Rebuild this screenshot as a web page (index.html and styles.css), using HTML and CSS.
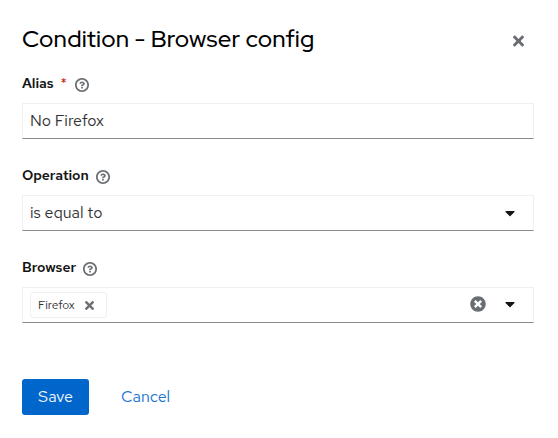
FILE: index.html
```html
<!DOCTYPE html>
<html lang="en">
<head>
<meta charset="utf-8">
<title>Condition - Browser config</title>
<link rel="stylesheet" href="styles.css">
</head>
<body>
<svg class="defs" width="0" height="0">
<symbol id="help" viewBox="0 0 1024 1024"><path d="M521.3,576 C627.5,576 713.7,502 713.7,413.7 C713.7,325.4 627.6,253.6 521.3,253.6 C366,253.6 334.5,337.7 329.2,407.2 C329.2,414.3 335.2,416 343.5,416 L445,416 C450.5,416 458,415.5 460.8,406.5 C460.8,362.6 582.9,357.1 582.9,413.6 C582.9,441.9 556.2,470.9 521.3,473 C486.4,475.1 447.3,479.8 447.3,521.7 L447.3,553.8 C447.3,570.8 456.1,576 472,576 L521.3,576 M575.3,751.3 L575.3,655.3 C575.3,643.3 567.3,639 559.3,639 L463.3,639 C454.3,639 447.3,643.3 447.3,655.3 L447.3,751.3 C447.3,760.3 455.3,767.3 463.3,767.3 L559.3,767.3 C568.3,767.3 575.3,760.3 575.3,751.3 M512,0 C229.2,0 0,229.2 0,512 C0,794.8 229.2,1024 512,1024 C794.8,1024 1024,794.8 1024,512 C1024,229.2 794.8,0 512,0 M512,896 C300,896 128,724 128,512 C128,300 300,128 512,128 C724,128 896,300 896,512 C896,724 724,896 512,896"/></symbol>
<symbol id="times" viewBox="0 0 352 512"><path d="M242.72 256l100.07-100.07c12.28-12.28 12.28-32.19 0-44.48l-22.24-22.24c-12.28-12.28-32.19-12.28-44.48 0L176 189.28 75.93 89.21c-12.28-12.28-32.19-12.28-44.48 0L9.21 111.45c-12.28 12.28-12.28 32.19 0 44.48L109.28 256 9.21 356.07c-12.28 12.28-12.28 32.19 0 44.48l22.24 22.24c12.28 12.28 32.2 12.28 44.48 0L176 322.72l100.07 100.07c12.28 12.28 32.2 12.28 44.48 0l22.24-22.24c12.28-12.28 12.28-32.19 0-44.48L242.72 256z"/></symbol>
<symbol id="caret" viewBox="0 0 320 512"><path d="M31.3 192h257.3c17.8 0 26.7 21.5 14.1 34.1L174.1 354.8c-7.8 7.8-20.5 7.8-28.3 0L17.2 226.1C4.6 213.5 13.5 192 31.3 192z"/></symbol>
<symbol id="clear" viewBox="0 0 512 512"><path d="M256 8C119 8 8 119 8 256s111 248 248 248 248-111 248-248S393 8 256 8zm121.6 313.1c4.7 4.7 4.7 12.3 0 17L338 377.6c-4.7 4.7-12.3 4.7-17 0L256 312l-65.1 65.6c-4.7 4.7-12.3 4.7-17 0L134.4 338c-4.7-4.7-4.7-12.3 0-17l65.6-65-65.6-65.1c-4.7-4.7-4.7-12.3 0-17l39.6-39.6c4.7-4.7 12.3-4.7 17 0l65 65.7 65.1-65.6c4.7-4.7 12.3-4.7 17 0l39.6 39.6c4.7 4.7 4.7 12.3 0 17L312 256l65.6 65.1z"/></symbol>
</svg>
<main class="modal">
<header class="header"><h1>Condition - Browser config</h1><svg class="times close"><use href="#times"/></svg></header>
<section class="group">
<div class="label"><span>Alias</span><span class="required">*</span><svg class="help"><use href="#help"/></svg></div>
<div class="control"><span class="value">No Firefox</span></div>
</section>
<section class="group">
<div class="label"><span>Operation</span><svg class="help"><use href="#help"/></svg></div>
<div class="control"><span class="value">is equal to</span><svg class="caret"><use href="#caret"/></svg></div>
</section>
<section class="group">
<div class="label"><span>Browser</span><svg class="help"><use href="#help"/></svg></div>
<div class="control"><div class="chip"><span>Firefox</span><svg class="times"><use href="#times"/></svg></div><svg class="clear"><use href="#clear"/></svg><svg class="caret"><use href="#caret"/></svg></div>
</section>
<footer class="actions"><button class="save">Save</button><button class="cancel">Cancel</button></footer>
</main>
</body>
</html>
```
FILE: styles.css
```css
* { box-sizing: border-box; }
body { margin: 0; background: #fff; color: #151515; font: 400 16px/24px "Red Hat Text", Inter, sans-serif; }
.defs { position: absolute; }
svg { display: block; flex: none; fill: #6a6e73; }
.modal { padding: 23px 24px 0 22px; }
.header { display: flex; align-items: center; height: 32px; margin-bottom: 17px; }
h1 { flex: 1; margin: 0; font: 500 24px/32px "Red Hat Display", "Red Hat Text", Inter, sans-serif; color: #000; letter-spacing: 0.17px; white-space: nowrap; }
.times { width: 11px; height: 16px; }
.close { margin: 4px 10.5px 0 0; }
.group { height: 92px; }
.label { display: flex; align-items: center; height: 22px; margin-bottom: 9px; font-size: 14px; font-weight: 600; letter-spacing: -0.1px; }
.required { margin-left: 7px; color: #c9190b; font-weight: 400; }
.help { width: 14px; height: 14px; margin: 4px 0 0 7px; }
.required + .help { margin-left: 8px; }
.control { display: flex; align-items: center; height: 36px; padding: 0 18px 0 7px; border: 1px solid #f0f0f0; border-bottom-color: #8a8d90; color: #333; }
.value { flex: 1; }
.caret { width: 10px; height: 16px; margin-top: -1px; fill: #151515; }
.chip { display: flex; align-items: center; justify-content: space-between; width: 77px; height: 26px; padding: 0 12.5px 0 7px; border: 1px solid #f0f0f0; border-radius: 3px; font-size: 12px; }
.chip .times { width: 9px; height: 13px; }
.clear { width: 16px; height: 16px; margin: -2px 19px 0 auto; }
.control .clear + .caret { margin-top: -2px; }
.actions { display: flex; gap: 16px; margin-top: 31px; }
button { height: 36px; padding: 0; border: 0; border-radius: 3px; font: inherit; }
.save { width: 67px; background: #06c; color: #f0f6fc; }
.cancel { width: 81px; background: transparent; color: #1a75d1; }
```
